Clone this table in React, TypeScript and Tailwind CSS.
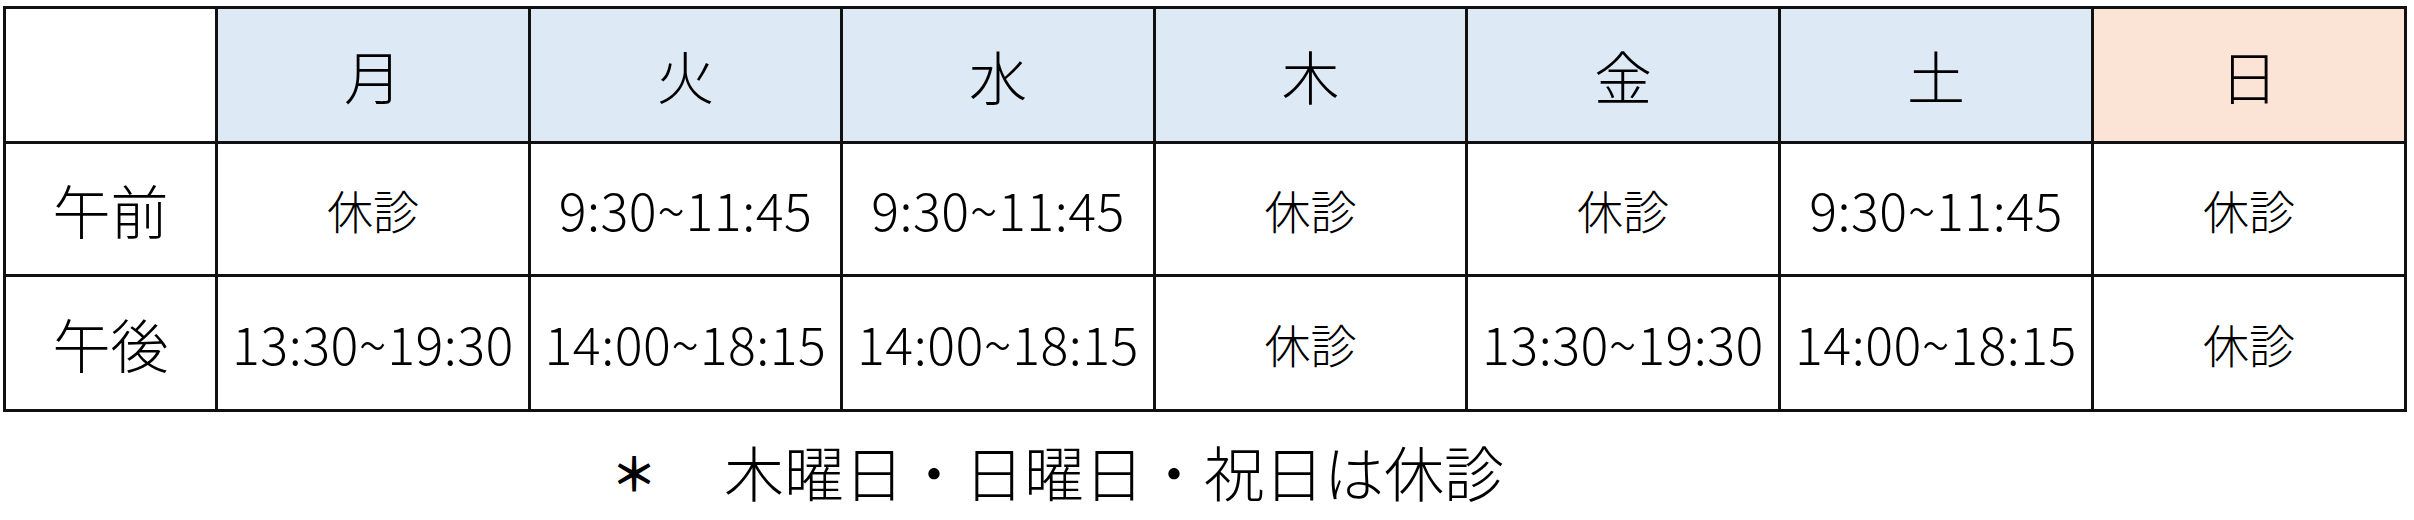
import React from "react";

const font = { fontFamily: '"Noto Sans CJK JP", "Noto Sans", sans-serif' };

const days = ["月", "火", "水", "木", "金", "土", "日"];
const am = ["休診", "9:30~11:45", "9:30~11:45", "休診", "休診", "9:30~11:45", "休診"];
const pm = ["13:30~19:30", "14:00~18:15", "14:00~18:15", "休診", "13:30~19:30", "14:00~18:15", "休診"];

function Cell({ text }: { text: string }) {
  const isTime = text !== "休診";
  return (
    <div className="bg-white flex items-center justify-center">
      <span
        className={
          isTime
            ? "text-[52px] leading-none font-light text-black tracking-[0.5px]"
            : "text-[46px] leading-none font-light text-black"
        }
      >
        {text}
      </span>
    </div>
  );
}

export default function App() {
  return (
    <div className="w-[2414px] h-[520px] bg-white" style={font}>
      <div className="pt-[6px] pl-[3px]">
        <div className="grid w-fit bg-[#111] p-[3px] gap-[3px] grid-cols-[209px_310px_309px_310px_309px_310px_310px_310px] grid-rows-[132px_130px_132px]">
          <div className="bg-white" />
          {days.map((d, i) => (
            <div
              key={d}
              className={
                i === 6
                  ? "bg-[#fbe4d6] flex items-center justify-center"
                  : "bg-[#dee9f6] flex items-center justify-center"
              }
            >
              <span className="text-[58px] leading-none font-light text-black">{d}</span>
            </div>
          ))}
          <div className="bg-white flex items-center justify-center">
            <span className="text-[58px] leading-none font-light text-black">午前</span>
          </div>
          {am.map((t, i) => (
            <Cell key={"am" + i} text={t} />
          ))}
          <div className="bg-white flex items-center justify-center">
            <span className="text-[58px] leading-none font-light text-black">午後</span>
          </div>
          {pm.map((t, i) => (
            <Cell key={"pm" + i} text={t} />
          ))}
        </div>
      </div>
      <div className="pl-[604px] pt-[29px] flex items-center text-[60px] leading-none font-light text-black">
        <span className="w-[120px] flex items-center">
          <span className="w-[60px] flex justify-center text-[46px] font-bold">＊</span>
        </span>
        <span>木曜日・日曜日・祝日は休診</span>
      </div>
    </div>
  );
}
